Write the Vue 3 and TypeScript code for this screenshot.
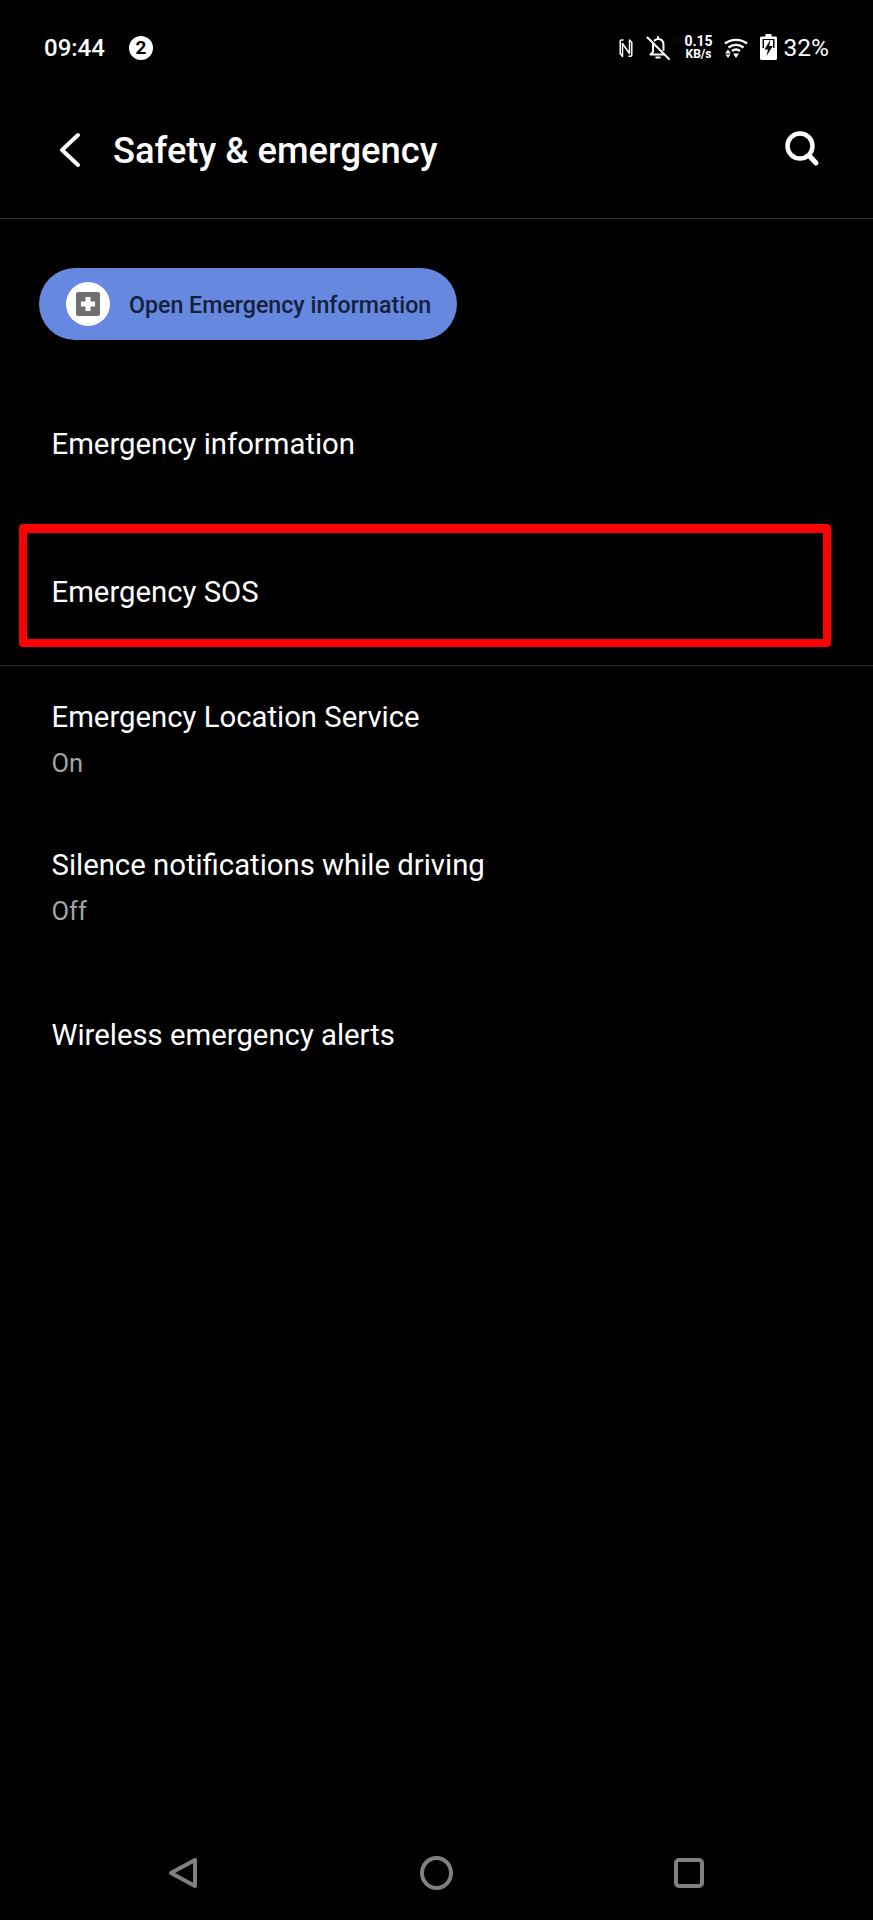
<script setup lang="ts">
const lowerRows = [
  { title: "Emergency Location Service", value: "On" },
  { title: "Silence notifications while driving", value: "Off" },
];
</script>

<template>
  <div class="screen">
    <div class="status">
      <span class="time">09:44</span>
      <span class="badge">2</span>
      <div class="status-right">
        <svg class="i-nfc" width="14" height="20" viewBox="0 0 14 20" fill="none" stroke="#fff" stroke-width="1.500" stroke-linejoin="round" stroke-linecap="round">
          <path d="M4 2H2.500C1.600 2 1.200 2.500 1.200 3.300V15.500L3.500 18.500V5.500L10.500 15.500V2L12.800 4.500V17C12.800 17.700 12.300 18.200 11.500 18.200H10" />
        </svg>
        <svg class="i-bell" width="24" height="24" viewBox="0 0 24 24" fill="none" stroke="#fff" stroke-width="2" stroke-linecap="round" stroke-linejoin="round">
          <path d="M7 7.500V16l-2.500 2.500H18M8.500 4.500C10 3.400 11 3 12 3c3.500 0 5.500 2.500 5.500 6v5" />
          <path d="M12 1v2M10.300 21.500h3.400" />
          <path d="M1.500 1.500 23 23" />
        </svg>
        <div class="speed"><span>0.15</span><span class="unit">KB/s</span></div>
        <svg class="i-wifi" width="24" height="20" viewBox="0 0 24 20" fill="none" stroke="#fff" stroke-width="2.400">
          <path d="M1 5.500C7.500 .6 16.500 .6 23 5.500M4.500 9.500C9 6 15 6 19.500 9.500M8 13c2.500-1.800 5.500-1.800 8 0" />
          <path d="M4 11.500 7 15.500H1zM4 20 1.500 16.500h5zM12 20 9 15.500h6z" fill="#fff" stroke="none" />
        </svg>
        <svg class="i-battery" width="17" height="26" viewBox="0 0 17 26">
          <path fill="#fff" fill-rule="evenodd" d="M5.500 0h6v2.500h4c.8 0 1.500.7 1.500 1.500v20.500c0 .8-.7 1.500-1.500 1.500h-14C.7 26 0 25.300 0 24.500V4c0-.8.7-1.500 1.500-1.500h4zM2.500 5v18.500h12V5z" />
          <path fill="#fff" d="M2 14h13v10H2z" />
          <path fill="#fff" d="M4 6h9v9H4z" />
          <path fill="#000" d="M10.500 5.500 4.500 15.500H8L6.500 22 12.800 12H9.200z" />
        </svg>
        <span class="battery">32%</span>
      </div>
    </div>

    <header class="toolbar">
      <svg class="back" width="24" height="36" viewBox="0 0 24 36" fill="none" stroke="#fff" stroke-width="4" stroke-linecap="round" stroke-linejoin="round">
        <path d="M20 3 4 18l16 15" />
      </svg>
      <h1>Safety &amp; emergency</h1>
      <svg class="search" width="38" height="38" viewBox="0 0 38 38" fill="none" stroke="#fff" stroke-linecap="round">
        <circle cx="17" cy="16" r="12.500" stroke-width="4.500" />
        <path d="M26 25.500 33 33" stroke-width="5" />
      </svg>
    </header>

    <section class="top-group">
      <button class="pill">
        <span class="pill-icon">
          <svg width="24" height="24" viewBox="0 0 24 24">
            <path fill="#6f6f6f" fill-rule="evenodd" d="M2 0h20a2 2 0 0 1 2 2v20a2 2 0 0 1-2 2H2a2 2 0 0 1-2-2V2a2 2 0 0 1 2-2zm7.500 5v4.500H5v5h4.500V19h5v-4.500H19v-5h-4.500V5z" />
          </svg>
        </span>
        <span class="pill-text">Open Emergency information</span>
      </button>
      <div class="row row-info">Emergency information</div>
      <div class="row row-sos">Emergency SOS</div>
    </section>

    <section class="bottom-group">
      <div v-for="r in lowerRows" :key="r.title" class="row row-two">
        <div>{{ r.title }}</div>
        <div class="value">{{ r.value }}</div>
      </div>
      <div class="row row-wireless">Wireless emergency alerts</div>
    </section>

    <nav class="navbar">
      <svg width="30" height="32" viewBox="0 0 30 32" fill="none" stroke="#808080" stroke-width="4" stroke-linejoin="round">
        <path d="M27 3v26L3 16z" />
      </svg>
      <svg width="33" height="34" viewBox="0 0 33 34" fill="none" stroke="#808080" stroke-width="4">
        <ellipse cx="16.500" cy="17" rx="14.500" ry="15" />
      </svg>
      <svg width="30" height="30" viewBox="0 0 30 30" fill="none" stroke="#808080" stroke-width="4">
        <rect x="2" y="2" width="26" height="26" rx="3" />
      </svg>
    </nav>
  </div>
</template>

<style scoped>
.screen {
  height: 1920px;
  display: flex;
  flex-direction: column;
  background: #000;
  color: #fff;
  font-family: Roboto, "Liberation Sans", sans-serif;
  overflow: hidden;
}
.status {
  height: 94px;
  padding: 1px 44px 0;
  box-sizing: border-box;
  display: flex;
  align-items: center;
}
.time {
  font-size: 24px;
  font-weight: 500;
}
.badge {
  width: 24px;
  height: 24px;
  margin-left: 24px;
  border-radius: 50%;
  background: #fff;
  color: #000;
  font-size: 19px;
  font-weight: 700;
  line-height: 24px;
  text-align: center;
}
.status-right {
  margin-left: auto;
  display: flex;
  align-items: center;
}
.i-bell {
  margin-left: 13px;
}
.speed {
  margin-left: 14px;
  width: 30px;
  display: flex;
  flex-direction: column;
  align-items: center;
  font-size: 14px;
  font-weight: 700;
  line-height: 13px;
}
.unit {
  font-size: 12px;
}
.i-wifi {
  margin-left: 10px;
}
.i-battery {
  margin-left: 12px;
  margin-top: -1px;
}
.battery {
  margin-left: 7px;
  font-size: 24.500px;
  font-weight: 400;
}
.toolbar {
  height: 125px;
  padding: 0 52px 12px 58px;
  box-sizing: border-box;
  display: flex;
  align-items: center;
  border-bottom: 1px solid #2e2e2e;
}
h1 {
  margin: 0 0 0 31px;
  font-size: 36.300px;
  font-weight: 500;
}
.search {
  margin-left: auto;
  margin-top: -2px;
}
.top-group {
  height: 447px;
  padding-top: 49px;
  box-sizing: border-box;
  border-bottom: 1px solid #2e2e2e;
}
.pill {
  display: flex;
  align-items: center;
  width: 418px;
  height: 72px;
  margin-left: 39px;
  padding: 0 0 0 27px;
  border: 0;
  border-radius: 36px;
  background: #6688de;
  color: #14203c;
  font: 500 23.200px Roboto, sans-serif;
}
.pill-text {
  padding-top: 2px;
}
.pill-icon {
  width: 44px;
  height: 44px;
  margin-right: 19px;
  border-radius: 50%;
  background: #fff;
  display: flex;
  align-items: center;
  justify-content: center;
}
.row {
  padding-left: 51.500px;
  font-size: 29.300px;
  line-height: 40px;
}
.row-info {
  margin-top: 84px;
}
.row-sos {
  box-sizing: border-box;
  height: 123px;
  width: 812px;
  margin: 60px 0 0 19px;
  padding: 39px 0 0 24.500px;
  border: 8px solid #ff0000;
  border-top-width: 9px;
  border-radius: 4px;
}
.bottom-group {
  padding-top: 31px;
}
.row-two {
  height: 148px;
}
.value {
  margin-top: 8px;
  color: #a3a3a3;
  font-size: 25.500px;
  line-height: 36px;
}
.row-wireless {
  margin-top: 22px;
}
.navbar {
  margin-top: auto;
  height: 94px;
  padding: 0 169px 0 168px;
  box-sizing: border-box;
  display: flex;
  justify-content: space-between;
  align-items: center;
}
</style>

<style>
body {
  background: #000;
}
</style>
